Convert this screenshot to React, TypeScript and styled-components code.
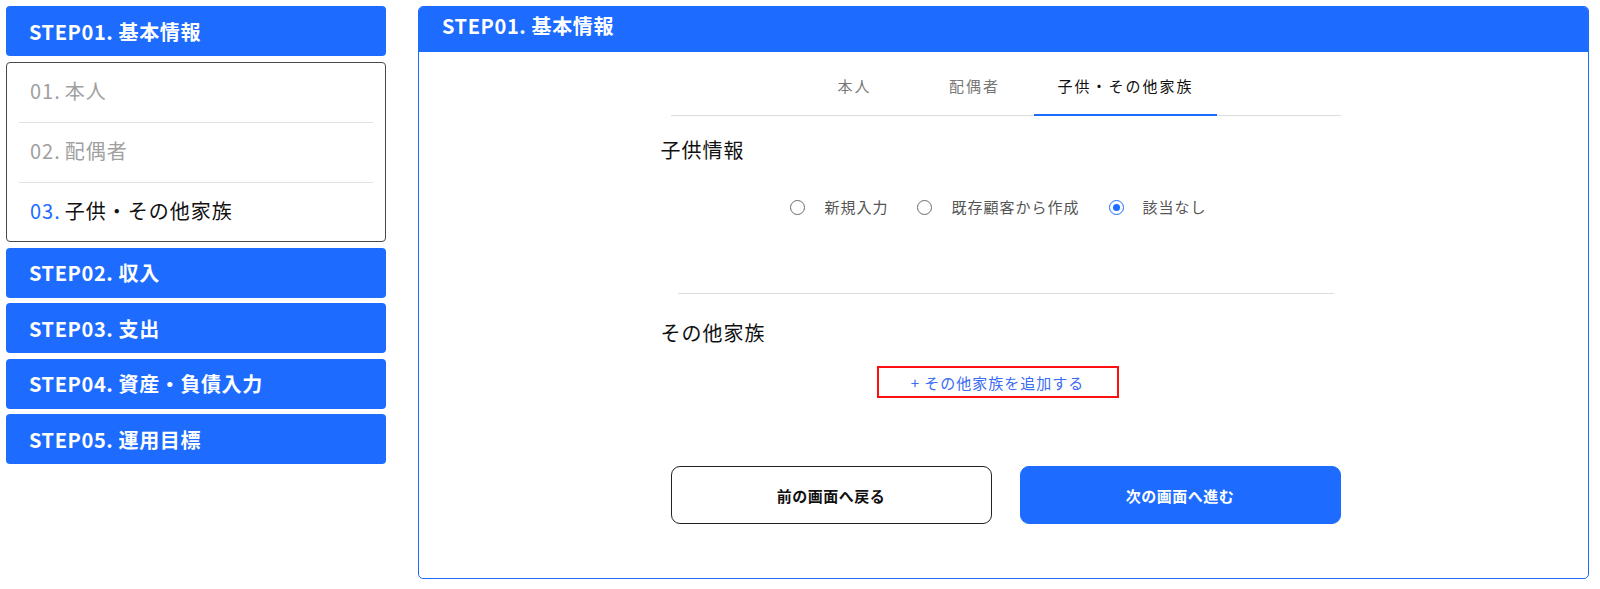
import React from "react";
import styled, { createGlobalStyle } from "styled-components";

const BLUE = "#1d6cff";

const GlobalStyle = createGlobalStyle`
  html, body { margin: 0; padding: 0; background: #fff; }
  body {
    font-family: "Noto Sans CJK JP", "Noto Sans", sans-serif;
    color: #111;
  }
  * { box-sizing: border-box; }
`;

const Page = styled.div`
  display: grid;
  grid-template-columns: 380px 1171px;
  column-gap: 32px;
  padding: 6px 0 0 6px;
  align-items: start;
`;

const Sidebar = styled.nav`
  display: flex;
  flex-direction: column;
  gap: 5.5px;
`;

const StepHeader = styled.div`
  height: 50px;
  background: ${BLUE};
  border-radius: 4px;
  color: #fff;
  font-size: 20px;
  font-weight: 700;
  letter-spacing: 0.6px;
  display: flex;
  align-items: center;
  padding-left: 23px;
`;

const SubList = styled.div`
  border: 1px solid #4a4a4a;
  border-radius: 4px;
  padding: 0 12px;
  display: flex;
  flex-direction: column;
`;

const SubItem = styled.div<{ $active?: boolean }>`
  height: 59.5px;
  display: flex;
  align-items: center;
  padding: 0 0 3px 11px;
  font-size: 20px;
  letter-spacing: 1px;
  color: ${(p) => (p.$active ? "#111" : "#a0a0a0")};
  & + & { border-top: 1px solid #e2e2e2; }
`;

const SubNum = styled.span`
  color: ${BLUE};
  margin-right: 4px;
`;

const PlainNum = styled.span`
  margin-right: 4px;
`;

const Panel = styled.section`
  border: 1px solid ${BLUE};
  border-radius: 5px;
  overflow: hidden;
  height: 573px;
  display: flex;
  flex-direction: column;
`;

const PanelHeader = styled.div`
  background: ${BLUE};
  color: #fff;
  font-size: 20px;
  font-weight: 700;
  letter-spacing: 0.6px;
  line-height: 28px;
  padding: 5px 23px 12px;
`;

const PanelBody = styled.div`
  display: flex;
  justify-content: center;
  padding: 16px 0 0 4px;
`;

const Column = styled.div`
  width: 686px;
  display: flex;
  flex-direction: column;
`;

const TabBar = styled.div`
  display: flex;
  justify-content: center;
  margin: 0 8px;
  border-bottom: 1px solid #dcdcdc;
`;

const Tab = styled.div<{ $active?: boolean }>`
  min-width: 120px;
  padding: 8px 23px 18px;
  line-height: 20px;
  text-align: center;
  font-size: 15px;
  letter-spacing: 2px;
  color: ${(p) => (p.$active ? "#111" : "#777")};
  border-bottom: 2px solid ${(p) => (p.$active ? BLUE : "transparent")};
  margin-bottom: -1px;
`;

const SectionTitle = styled.h2<{ $top: number }>`
  margin: ${(p) => p.$top}px 0 0 -2px;
  font-size: 20px;
  font-weight: 400;
  letter-spacing: 1px;
  line-height: 28px;
  color: #111;
`;

const RadioRow = styled.div`
  display: flex;
  justify-content: center;
  gap: 29px;
  margin-top: 33px;
  padding-right: 14px;
  height: 20px;
`;

const RadioLabel = styled.label`
  display: flex;
  align-items: center;
  gap: 19px;
  font-size: 15px;
  letter-spacing: 1px;
  line-height: 20px;
  color: #555;
`;

const RadioCircle = styled.span<{ $checked?: boolean }>`
  width: 15px;
  height: 15px;
  border-radius: 50%;
  border: 1.5px solid ${(p) => (p.$checked ? BLUE : "#6b6b6b")};
  display: flex;
  align-items: center;
  justify-content: center;
  &::after {
    content: "";
    width: 7px;
    height: 7px;
    border-radius: 50%;
    background: ${BLUE};
    display: ${(p) => (p.$checked ? "block" : "none")};
  }
`;

const Divider = styled.hr`
  border: none;
  border-top: 1px solid #dcdcdc;
  margin: 76px 15px 0;
`;

const AddRow = styled.div`
  display: flex;
  justify-content: center;
  padding-right: 16px;
  margin-top: 19px;
`;

const AddButton = styled.button`
  width: 242px;
  height: 32px;
  border: 2px solid #ff1010;
  background: #fff;
  color: #3a6cf4;
  font-family: inherit;
  font-size: 15px;
  letter-spacing: 1px;
  padding: 0;
  cursor: pointer;
`;

const ButtonRow = styled.div`
  display: flex;
  gap: 28px;
  margin: 68px 8px 0;
`;

const NavButton = styled.button<{ $primary?: boolean }>`
  flex: 1;
  height: 58px;
  border-radius: 9px;
  font-family: inherit;
  font-size: 15px;
  font-weight: 700;
  letter-spacing: 0.5px;
  cursor: pointer;
  border: ${(p) => (p.$primary ? `1px solid ${BLUE}` : "1px solid #222")};
  background: ${(p) => (p.$primary ? BLUE : "#fff")};
  color: ${(p) => (p.$primary ? "#fff" : "#111")};
`;

export default function App() {
  return (
    <>
      <GlobalStyle />
      <Page>
        <Sidebar>
          <StepHeader>STEP01. 基本情報</StepHeader>
          <SubList>
            <SubItem><PlainNum>01.</PlainNum>本人</SubItem>
            <SubItem><PlainNum>02.</PlainNum>配偶者</SubItem>
            <SubItem $active><SubNum>03.</SubNum>子供・その他家族</SubItem>
          </SubList>
          <StepHeader>STEP02. 収入</StepHeader>
          <StepHeader>STEP03. 支出</StepHeader>
          <StepHeader>STEP04. 資産・負債入力</StepHeader>
          <StepHeader>STEP05. 運用目標</StepHeader>
        </Sidebar>
        <Panel>
          <PanelHeader>STEP01. 基本情報</PanelHeader>
          <PanelBody>
            <Column>
              <TabBar>
                <Tab>本人</Tab>
                <Tab>配偶者</Tab>
                <Tab $active>子供・その他家族</Tab>
              </TabBar>
              <SectionTitle $top={20}>子供情報</SectionTitle>
              <RadioRow>
                <RadioLabel><RadioCircle />新規入力</RadioLabel>
                <RadioLabel><RadioCircle />既存顧客から作成</RadioLabel>
                <RadioLabel><RadioCircle $checked />該当なし</RadioLabel>
              </RadioRow>
              <Divider />
              <SectionTitle $top={25}>その他家族</SectionTitle>
              <AddRow>
                <AddButton>+ その他家族を追加する</AddButton>
              </AddRow>
              <ButtonRow>
                <NavButton>前の画面へ戻る</NavButton>
                <NavButton $primary>次の画面へ進む</NavButton>
              </ButtonRow>
            </Column>
          </PanelBody>
        </Panel>
      </Page>
    </>
  );
}
